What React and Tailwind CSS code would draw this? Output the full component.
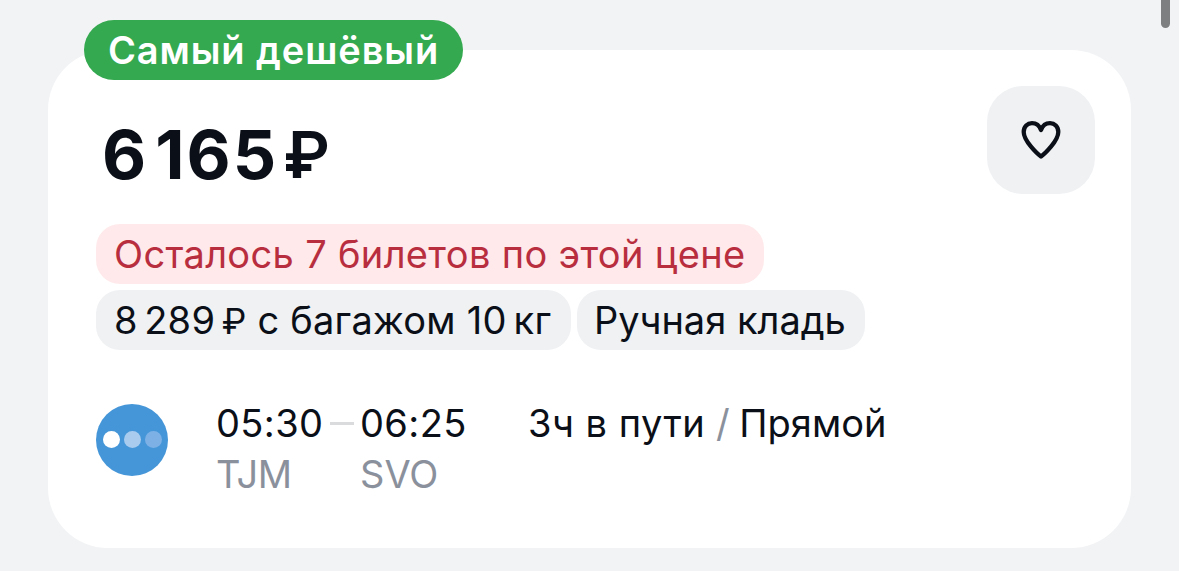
function HeartIcon() {
  return (
    <svg width="44" height="44" viewBox="0 0 44 44" fill="none" stroke="#0b0f17" strokeWidth="4.300" strokeLinejoin="round">
      <path d="M22 38.500C18.500 36 4.700 23 4.700 14C4.700 8.500 8.500 5.100 13 5.100C17 5.100 20.400 7.600 22 12C23.600 7.600 27 5.100 31 5.100C35.500 5.100 39.300 8.500 39.300 14C39.300 23 25.500 36 22 38.500Z" />
    </svg>
  )
}

function Chip({ className, children }) {
  return (
    <div className={`flex h-[60px] items-center whitespace-nowrap rounded-[24px] text-[38px] ${className}`}>
      <div>{children}</div>
    </div>
  )
}

function AirlineLogo() {
  return (
    <div className="flex size-[72px] shrink-0 items-center justify-center gap-[4px] rounded-full bg-[#4596d8] pb-px">
      <span className="size-[17px] rounded-full bg-white" />
      <span className="size-[17px] rounded-full bg-[#a9ccee]" />
      <span className="size-[17px] rounded-full bg-[#7db1e6]" />
    </div>
  )
}

export default function App() {
  return (
    <div className="relative h-[571px] w-[1179px] overflow-hidden bg-[#f2f3f5] px-12 pt-[50px] font-['Inter',sans-serif] text-[#0b0f17]">
      <div className="absolute -top-8 left-[1161px] h-[60px] w-[9px] rounded-full bg-[#7e7f81]" />

      <div className="relative h-[498px] w-[1083px] rounded-[60px] bg-white px-12 pt-9">
        <div className="absolute -top-[30px] left-9 flex h-[60px] w-[379px] items-center justify-center whitespace-nowrap rounded-full bg-[#34a94f] text-[38px] font-semibold tracking-[0.9px] text-white">
          Самый дешёвый
        </div>

        <div className="-mr-3 flex h-[108px] justify-between">
          <div className="whitespace-nowrap pl-[6px] pt-[18px] text-[68px] font-bold leading-[100px] tracking-[2px] [word-spacing:-11px]">
            6 165 <span className="relative -top-px -ml-[2px] text-[64px] font-semibold">₽</span>
          </div>
          <button className="flex size-[108px] items-center justify-center rounded-[36px] bg-[#eff1f3]" aria-label="В избранное">
            <HeartIcon />
          </button>
        </div>

        <div className="mt-[30px] flex flex-col gap-[6px]">
          <Chip className="w-[668px] bg-[#ffe9ea] pl-[18px] tracking-[0.34px] text-[#b82e3f]">
            Осталось 7 билетов по этой цене
          </Chip>
          <div className="flex gap-[6px]">
            <Chip className="w-[475px] bg-[#eff1f3] pl-[18px] tracking-[0.25px]">
              <span className="[word-spacing:-4.500px]">8 289 </span>
              <span className="text-[35px]">₽</span> с багажом <span className="[word-spacing:-4px]">10 кг</span>
            </Chip>
            <Chip className="w-[288px] bg-[#eff1f3] pl-[17px]">Ручная кладь</Chip>
          </div>
        </div>

        <div className="mt-[54px] flex text-[38px]">
          <AirlineLogo />
          <div className="-mt-[6px] ml-[48px] w-[144px] leading-[51px]">
            <div className="flex h-[50px] items-center whitespace-nowrap tracking-[0.4px]">
              <span className="leading-[50px]">05:30</span>
              <span className="ml-[7px] h-[3px] w-6 shrink-0 bg-[#d9dbdd]" />
            </div>
            <div className="pt-px tracking-[-0.5px] text-[#8b919c]">TJM</div>
          </div>
          <div className="-mt-[6px] w-[168px] leading-[51px]">
            <div className="leading-[50px] tracking-[0.4px]">06:25</div>
            <div className="pt-px text-[#8b919c]">SVO</div>
          </div>
          <div className="-mt-[6px] whitespace-nowrap leading-[50px]">
            <span className="tracking-[0.5px]">3ч в пути</span> <span className="text-[#8b919c]">/</span>{' '}
            <span className="-ml-px">Прямой</span>
          </div>
        </div>
      </div>
    </div>
  )
}
